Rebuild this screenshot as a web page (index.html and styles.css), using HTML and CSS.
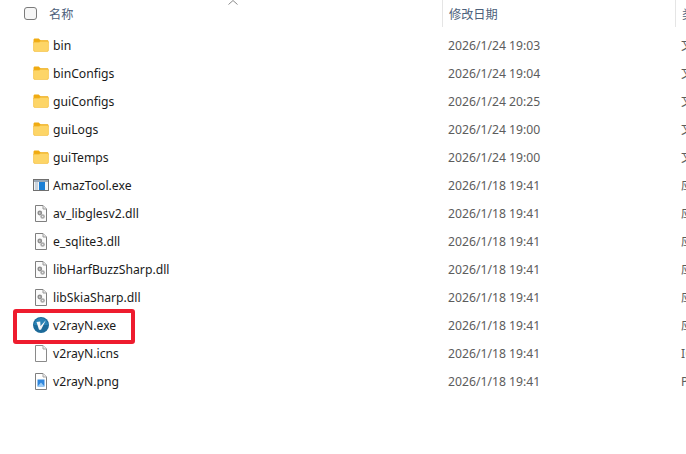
FILE: index.html
```html
<!DOCTYPE html>
<html lang="zh-CN">
<head>
    <meta charset="UTF-8">
    <title>v2rayN</title>
    <link rel="stylesheet" href="styles.css">
</head>
<body>

<svg class="defs" width="0" height="0">
    <symbol id="folder" viewBox="0 0 17 15">
        <path d="M0.5 2C0.5 1.2 1.1 0.5 2 0.5H6L8 2.5H15.2C16 2.5 16.5 3 16.5 3.8V5H0.5Z" fill="#f0ab12"/>
        <path d="M0.5 4.5H6.5L8 3.5H15.2C16 3.5 16.5 4 16.5 4.8V13C16.5 13.9 15.9 14.5 15 14.5H2C1.1 14.5 0.5 13.9 0.5 13Z" fill="#fdd567" stroke="#f2b92f" stroke-width="0.6"/>
    </symbol>
    <symbol id="dll" viewBox="0 0 12 17">
        <path d="M0.5 0.5H8L11.5 4V16.5H0.5Z" fill="#fbfbfb" stroke="#7f7f7f"/>
        <path d="M8 0.5V4H11.5" fill="#e8e8e8" stroke="#9a9a9a"/>
        <circle cx="4.8" cy="8" r="2.4" fill="#8f8f8f"/>
        <circle cx="7.6" cy="11.5" r="2.3" fill="#a8a8a8"/>
        <circle cx="4.8" cy="8" r="0.7" fill="#eee"/>
        <circle cx="7.6" cy="11.5" r="0.7" fill="#eee"/>
    </symbol>
</svg>

<div class="header">
    <div class="col-name">
        <span class="checkbox"></span>
        <span>名称</span>
        <svg class="sort" width="10" height="5" viewBox="0 0 10 5"><path d="M0.5 4.5L5 0.5L9.5 4.5" fill="none" stroke="#8a8a8a"/></svg>
    </div>
    <div class="col-date">修改日期</div>
    <div class="col-type">类型</div>
</div>

<div class="list">
    <div class="row">
        <div class="col-name"><svg class="icon" width="16" height="14"><use href="#folder"/></svg>bin</div>
        <div class="col-date">2026/1/24 19:03</div>
        <div class="col-type">文件夹</div>
    </div>
    <div class="row">
        <div class="col-name"><svg class="icon" width="16" height="14"><use href="#folder"/></svg>binConfigs</div>
        <div class="col-date">2026/1/24 19:04</div>
        <div class="col-type">文件夹</div>
    </div>
    <div class="row">
        <div class="col-name"><svg class="icon" width="16" height="14"><use href="#folder"/></svg>guiConfigs</div>
        <div class="col-date">2026/1/24 20:25</div>
        <div class="col-type">文件夹</div>
    </div>
    <div class="row">
        <div class="col-name"><svg class="icon" width="16" height="14"><use href="#folder"/></svg>guiLogs</div>
        <div class="col-date">2026/1/24 19:00</div>
        <div class="col-type">文件夹</div>
    </div>
    <div class="row">
        <div class="col-name"><svg class="icon" width="16" height="14"><use href="#folder"/></svg>guiTemps</div>
        <div class="col-date">2026/1/24 19:00</div>
        <div class="col-type">文件夹</div>
    </div>
    <div class="row">
        <div class="col-name">
            <svg class="icon" width="16" height="14" viewBox="0 0 16 14">
                <rect x="0.5" y="1.5" width="15" height="11" fill="#f4f4f4" stroke="#6f6f6f"/>
                <rect x="1" y="2" width="14" height="2" fill="#9aa7b5"/>
                <rect x="6" y="4" width="6" height="8" fill="#1a7fd6"/>
                <rect x="2" y="4" width="3" height="8" fill="#c9d3dd"/>
            </svg>AmazTool.exe
        </div>
        <div class="col-date">2026/1/18 19:41</div>
        <div class="col-type">应用程序</div>
    </div>
    <div class="row">
        <div class="col-name"><svg class="icon icon-file" width="12" height="17"><use href="#dll"/></svg>av_libglesv2.dll</div>
        <div class="col-date">2026/1/18 19:41</div>
        <div class="col-type">应用程序扩展</div>
    </div>
    <div class="row">
        <div class="col-name"><svg class="icon icon-file" width="12" height="17"><use href="#dll"/></svg>e_sqlite3.dll</div>
        <div class="col-date">2026/1/18 19:41</div>
        <div class="col-type">应用程序扩展</div>
    </div>
    <div class="row">
        <div class="col-name"><svg class="icon icon-file" width="12" height="17"><use href="#dll"/></svg>libHarfBuzzSharp.dll</div>
        <div class="col-date">2026/1/18 19:41</div>
        <div class="col-type">应用程序扩展</div>
    </div>
    <div class="row">
        <div class="col-name"><svg class="icon icon-file" width="12" height="17"><use href="#dll"/></svg>libSkiaSharp.dll</div>
        <div class="col-date">2026/1/18 19:41</div>
        <div class="col-type">应用程序扩展</div>
    </div>
    <div class="row">
        <div class="col-name">
            <svg class="icon" width="16" height="16" viewBox="0 0 16 16">
                <circle cx="8" cy="8" r="8" fill="#1c6a99"/>
                <path d="M1 8A7 7 0 0 1 15 8Z" fill="#2b83b5"/>
                <path d="M3.5 5L7.2 4.4L7.6 9L12.8 3.2L8 12.8H6Z" fill="#f6f7f8"/>
            </svg>v2rayN.exe
        </div>
        <div class="col-date">2026/1/18 19:41</div>
        <div class="col-type">应用程序</div>
        <div class="marker"></div>
    </div>
    <div class="row">
        <div class="col-name">
            <svg class="icon icon-file" width="12" height="17" viewBox="0 0 12 17">
                <path d="M0.5 0.5H8L11.5 4V16.5H0.5Z" fill="#fff" stroke="#8a8a8a"/>
                <path d="M8 0.5V4H11.5" fill="#eee" stroke="#a5a5a5"/>
            </svg>v2rayN.icns
        </div>
        <div class="col-date">2026/1/18 19:41</div>
        <div class="col-type">ICNS 文件</div>
    </div>
    <div class="row">
        <div class="col-name">
            <svg class="icon icon-file" width="12" height="17" viewBox="0 0 12 17">
                <path d="M0.5 0.5H8L11.5 4V16.5H0.5Z" fill="#fff" stroke="#7f7f7f"/>
                <path d="M8 0.5V4H11.5" fill="#eee" stroke="#a5a5a5"/>
                <rect x="2.5" y="6.5" width="7" height="7" fill="#2f86dc"/>
                <path d="M2.5 13.5L6 9.5L9.5 13.5Z" fill="#9ccbf3"/>
            </svg>v2rayN.png
        </div>
        <div class="col-date">2026/1/18 19:41</div>
        <div class="col-type">PNG 文件</div>
    </div>
</div>

</body>
</html>
```

FILE: styles.css
```css
body { margin: 0; background: #fff; font-family: "Noto Sans", "Noto Sans CJK SC", sans-serif; font-size: 12.2px; color: #1a1a1a; overflow: hidden; }
.defs { position: absolute; }
.header, .row { display: grid; grid-template-columns: 442px 233px 1fr; }
.header { height: 27px; color: #4c607a; white-space: nowrap; }
.header .col-name, .header .col-date, .header .col-type { display: flex; align-items: center; min-width: 0; overflow: hidden; }
.header .col-name { padding-left: 24px; gap: 12px; position: relative; }
.header .col-date, .header .col-type { border-left: 1px solid #e5e5e5; padding-left: 6px; box-sizing: border-box; }
.checkbox { width: 11px; height: 11px; border: 1px solid #7b7b7b; border-radius: 3px; background: #f6f6f6; flex: none; }
.sort { position: absolute; left: 228px; top: 0; }
.list { padding-top: 4px; }
.row { height: 28px; align-items: center; position: relative; }
.row .col-name { display: flex; align-items: center; padding-left: 33px; }
.row .col-date { padding-left: 6px; color: #5c5c5c; }
.row .col-type { padding-left: 6px; color: #5c5c5c; white-space: nowrap; overflow: hidden; }
.icon { margin-right: 4px; flex: none; }
.icon-file { margin-left: 2px; margin-right: 6px; }
.marker { position: absolute; left: 13px; top: -2px; width: 114px; height: 27px; border: 4px solid #ee1c2e; border-radius: 3px; }
```
